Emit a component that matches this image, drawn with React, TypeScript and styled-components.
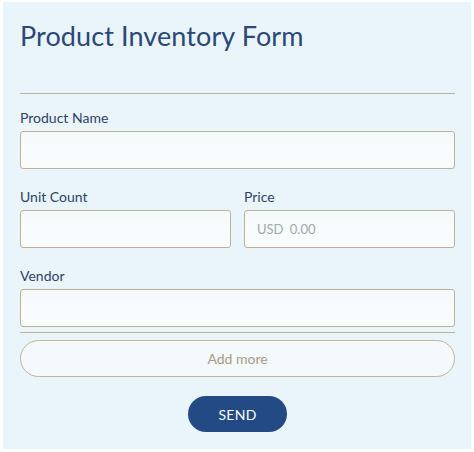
import React from 'react'
import styled, { createGlobalStyle } from 'styled-components'

const GlobalStyle = createGlobalStyle`
  html, body {
    margin: 0;
    padding: 0;
    background: #fdfefe;
  }
  body {
    font-family: Lato, 'Open Sans', sans-serif;
  }
  * {
    box-sizing: border-box;
  }
`

const Card = styled.form`
  display: flex;
  flex-direction: column;
  width: 468px;
  height: 447px;
  margin: 2px 0 0 3px;
  padding: 18px 16px 0 17px;
  background: #e9f4fb;
`

const Title = styled.h1`
  margin: 0;
  font-size: 27px;
  line-height: 32px;
  font-weight: 400;
  color: #2b4876;
  letter-spacing: 0.1px;
`

const Divider = styled.hr<{ $top: number; $bottom: number }>`
  width: 100%;
  margin: ${(p) => p.$top}px 0 ${(p) => p.$bottom}px;
  border: 0;
  border-top: 1px solid #b9b29f;
  height: 0;
`

const Fields = styled.div`
  display: flex;
  flex-direction: column;
  gap: 19px;
`

const Pair = styled.div`
  display: grid;
  grid-template-columns: 1fr 1fr;
  gap: 13px;
`

const Field = styled.label`
  display: flex;
  flex-direction: column;
  gap: 4px;
`

const LabelText = styled.span`
  font-size: 14px;
  line-height: 18px;
  color: #2e4469;
`

const Input = styled.input`
  width: 100%;
  height: 38px;
  padding: 0 12px;
  border: 1px solid #bdb397;
  border-radius: 3px;
  background: linear-gradient(180deg, #f3f9fc 0%, #fafdfe 100%);
  font-family: Lato, 'Open Sans', sans-serif;
  font-size: 13px;
  color: #2e4469;
  outline: none;
  &::placeholder {
    color: #a3a9ae;
    word-spacing: 3px;
  }
`

const AddMore = styled.button`
  width: 100%;
  height: 37px;
  border: 1px solid #c0b69a;
  border-radius: 19px;
  background: #f4f9fc;
  font-family: Lato, 'Open Sans', sans-serif;
  font-size: 14px;
  color: #a69b86;
  cursor: pointer;
`

const SendRow = styled.div`
  display: flex;
  justify-content: center;
  margin-top: 19px;
`

const SendButton = styled.button`
  width: 99px;
  height: 36px;
  border: 0;
  border-radius: 18px;
  background: #244a85;
  font-family: Lato, 'Open Sans', sans-serif;
  font-size: 14px;
  color: #ffffff;
  letter-spacing: 0.3px;
  cursor: pointer;
`

const App = () => {
  return (
    <>
      <GlobalStyle />
      <Card onSubmit={(e) => e.preventDefault()}>
        <Title>Product Inventory Form</Title>
        <Divider $top={41} $bottom={15} />
        <Fields>
          <Field>
            <LabelText>Product Name</LabelText>
            <Input type="text" />
          </Field>
          <Pair>
            <Field>
              <LabelText>Unit Count</LabelText>
              <Input type="number" />
            </Field>
            <Field>
              <LabelText>Price</LabelText>
              <Input type="text" placeholder="USD 0.00" />
            </Field>
          </Pair>
          <Field>
            <LabelText>Vendor</LabelText>
            <Input type="text" />
          </Field>
        </Fields>
        <Divider $top={5} $bottom={7} />
        <AddMore type="button">Add more</AddMore>
        <SendRow>
          <SendButton type="submit">SEND</SendButton>
        </SendRow>
      </Card>
    </>
  )
}

export default App
